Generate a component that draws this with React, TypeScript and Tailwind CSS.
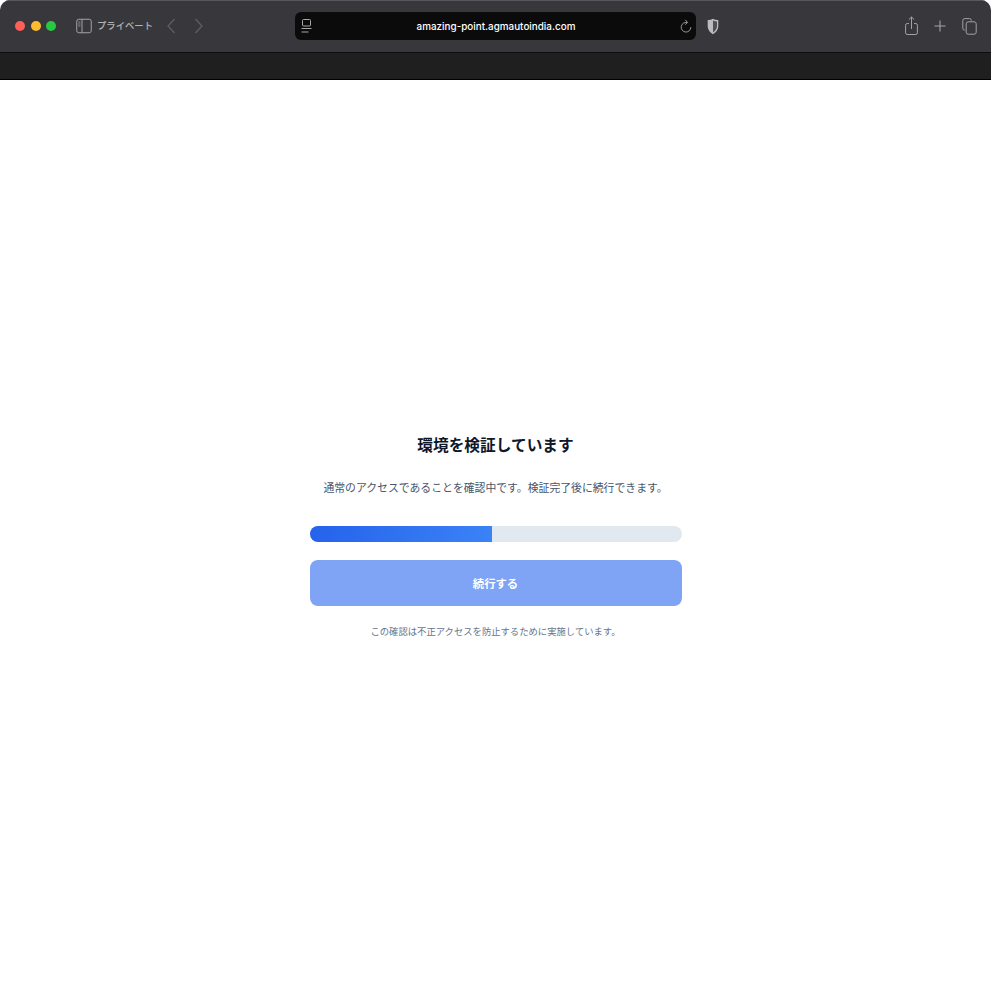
const cjk = "font-['Inter','Noto_Sans_CJK_JP',sans-serif]";

function SidebarIcon() {
  return (
    <svg width="16" height="16" viewBox="0 0 16 16" fill="none" stroke="#a3a3a7" strokeWidth="1">
      <rect x="0.75" y="1.25" width="14.5" height="13.5" rx="2" />
      <path d="M6 1.25V14.75" />
      <path d="M2.2 4h2.3M2.2 6h2.3M2.2 8h2.3" strokeWidth="0.8" />
    </svg>
  );
}

function Chevron({ flip }: { flip?: boolean }) {
  return (
    <svg width="9" height="16" viewBox="0 0 9 16" fill="none" stroke="#5f5f64" strokeWidth="1.2" className={flip ? "rotate-180" : ""}>
      <path d="M7.5 1L1 8l6.5 7" />
    </svg>
  );
}

function ReaderIcon() {
  return (
    <svg width="11" height="14" viewBox="0 0 11 14" fill="none" stroke="#a8a8ac" strokeWidth="1">
      <rect x="1.5" y="0.5" width="8" height="6.5" rx="1" />
      <path d="M0.5 9.5h10M0.5 13h7" />
    </svg>
  );
}

function ReloadIcon() {
  return (
    <svg width="12" height="15" viewBox="0 0 12 15" fill="none" stroke="#a8a8ac" strokeWidth="0.9">
      <path d="M7.2 3.6A4.8 4.8 0 1 0 10.8 8.2" />
      <path d="M5.2 0.8l2.4 2.6-2.4 2.2" />
    </svg>
  );
}

function ShieldIcon() {
  return (
    <svg width="12" height="17" viewBox="0 0 12 17">
      <path d="M6 0.7C4 1.7 2.4 2 0.7 2.1v6c0 3.8 2.5 6.6 5.3 8.1 2.8-1.5 5.3-4.3 5.3-8.1v-6C9.6 2 8 1.7 6 0.7z" fill="#bcbcc0" />
      <path d="M6 2.4C7.3 3 8.6 3.4 10 3.5v4.6c0 2.9-1.8 5.1-4 6.5z" fill="#505055" />
    </svg>
  );
}

function ShareIcon() {
  return (
    <svg width="13" height="20" viewBox="0 0 13 20" fill="none" stroke="#a3a3a7" strokeWidth="1">
      <path d="M4 7.5H2.2A1.7 1.7 0 0 0 .6 9.2v7.6a1.7 1.7 0 0 0 1.6 1.7h8.6a1.7 1.7 0 0 0 1.6-1.7V9.2a1.7 1.7 0 0 0-1.6-1.7H9" />
      <path d="M6.5 13V1M3.8 3.6L6.5 1l2.7 2.6" />
    </svg>
  );
}

function PlusIcon() {
  return (
    <svg width="12" height="12" viewBox="0 0 12 12" fill="none" stroke="#a3a3a7" strokeWidth="1.1">
      <path d="M6 0.5v11M.5 6h11" />
    </svg>
  );
}

function TabsIcon() {
  return (
    <svg width="15" height="17" viewBox="0 0 15 17" fill="none" stroke="#a3a3a7" strokeWidth="1">
      <path d="M2.8 12.2A2 2 0 0 1 .8 10.2V2.6a2 2 0 0 1 2-2h4.6a2 2 0 0 1 2 2" />
      <rect x="4.2" y="3.8" width="10" height="12.4" rx="2" />
    </svg>
  );
}

export default function App() {
  return (
    <div className={`flex h-[991px] w-[991px] flex-col overflow-hidden bg-white ${cjk}`}>
      <div className="flex flex-col overflow-hidden rounded-t-[10px]">
        <header className="flex h-[53px] shrink-0 items-center border-t border-b border-t-[#58585c] border-b-[#0c0c0d] bg-[#38383c] pr-[14px] pb-[1px] pl-[15px]">
          <div className="flex gap-[5.5px]">
            <span className="h-[10px] w-[10px] rounded-full bg-[#ff5f57]" />
            <span className="h-[10px] w-[10px] rounded-full bg-[#febc2e]" />
            <span className="h-[10px] w-[10px] rounded-full bg-[#28c840]" />
          </div>
          <div className="ml-[20px]">
            <SidebarIcon />
          </div>
          <span className="ml-[5px] w-[57px] text-[9.33px] font-medium whitespace-nowrap text-[#b4b4b8]">プライベート</span>
          <div className="ml-[13px] flex items-center gap-[18px]">
            <Chevron />
            <Chevron flip />
          </div>
          <div className="ml-[92px] flex h-[28px] w-[401px] items-center justify-between rounded-[6px] bg-[#0b0b0c] pr-[4px] pl-[6px]">
            <ReaderIcon />
            <span className="text-[9.9px] font-medium text-white">amazing-point.agmautoindia.com</span>
            <ReloadIcon />
          </div>
          <div className="ml-[11px]">
            <ShieldIcon />
          </div>
          <div className="ml-auto flex items-center gap-[16px]">
            <ShareIcon />
            <PlusIcon />
            <TabsIcon />
          </div>
        </header>
        <div className="h-[27px] shrink-0 border-b border-[#000000] bg-[#1f1f1f]" />
      </div>
      <main className="flex flex-1 flex-col items-center justify-center pt-[5px]">
        <div className="flex w-[372px] flex-col items-center">
          <h1 className="text-[15.7px] leading-[20px] font-bold text-[#0f172a]">環境を検証しています</h1>
          <p className="mt-[24px] text-[10.85px] leading-[16px] whitespace-nowrap text-[#475569]">
            通常のアクセスであることを確認中です。検証完了後に続行できます。
          </p>
          <div className="mt-[30px] h-[16px] w-full overflow-hidden rounded-[8px] bg-[#e2e8f0]">
            <div className="h-full w-[49%] bg-gradient-to-r from-[#2563eb] to-[#3b82f6]" />
          </div>
          <button className="mt-[18px] flex h-[46px] w-full items-center justify-center rounded-[8px] bg-[#7fa3f5] pt-[2px] text-[11.33px] font-bold text-white">
            続行する
          </button>
          <p className="mt-[18px] text-[9.33px] leading-[16px] whitespace-nowrap text-[#64748b]">
            この確認は不正アクセスを防止するために実施しています。
          </p>
        </div>
      </main>
    </div>
  );
}
